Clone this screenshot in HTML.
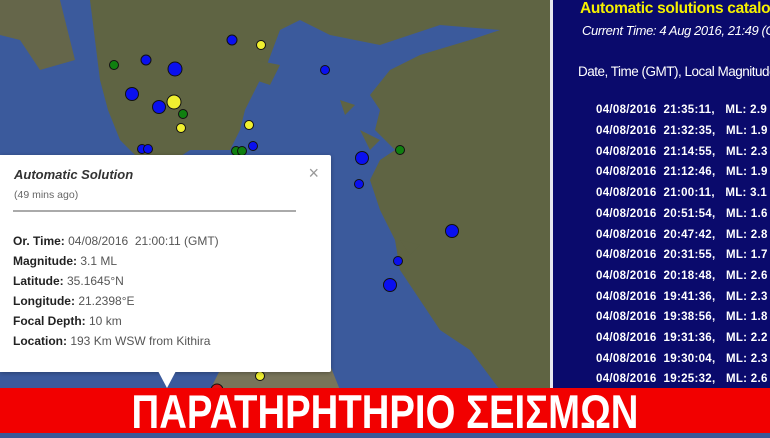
<!DOCTYPE html><html><head><meta charset="utf-8"><style>
body{margin:0;width:770px;height:433px;overflow:hidden;position:relative;font-family:"Liberation Sans",sans-serif;background:#3a5898}
#map{position:absolute;left:0;top:0}
#panel{position:absolute;left:550px;top:0;width:220px;height:390px;background:#0a0a6c;border-left:3px solid #e8e8f0}
.t{position:absolute;left:27px;top:0;color:#f5f000;font-weight:bold;font-size:15.5px;white-space:nowrap;letter-spacing:-0.3px}
.c{position:absolute;left:29px;top:23px;color:#fff;font-style:italic;font-size:13px;white-space:nowrap;letter-spacing:-0.4px}
.d{position:absolute;left:25px;top:64px;color:#fff;font-size:13.5px;white-space:nowrap;letter-spacing:-0.5px}
.r{position:absolute;left:43px;color:#fff;font-weight:bold;font-size:11.5px;white-space:nowrap;letter-spacing:0.3px}
#pop{position:absolute;left:0;top:155px;width:331px;height:217px;background:#fff;border-radius:0 2px 2px 0;box-shadow:0 1px 4px rgba(0,0,0,.3);font-size:12px;color:#555}
#pop b{color:#222}
#tail{position:absolute;left:158px;top:371px;width:0;height:0;border-left:9px solid transparent;border-right:9px solid transparent;border-top:17px solid #fff}
#ban{position:absolute;left:0;top:388px;width:770px;height:45px;background:#f20000;color:#fff;font-weight:bold;font-size:47px;text-align:center;line-height:47px;letter-spacing:0}
#ban span{display:inline-block;transform:scaleX(0.815)}
</style></head><body>
<svg id="map" width="552" height="390" viewBox="0 0 552 390">
<rect width="552" height="390" fill="#3b5a9c"/>
<path d="M0 0H60L75 60L40 70L20 40L0 35Z" fill="#65664a"/>
<path d="M90 0H552V390H500L470 350L440 330L420 300L400 270L395 240L380 210L370 180L380 160L395 150L375 130L380 110L370 95L390 70L420 55L470 40L500 30L440 25L380 45L330 35L300 20L280 30L265 70L255 90L245 110L240 130L230 150L190 150L175 160L140 160L120 140L108 110L100 80L95 40Z" fill="#5f6443"/>
<path d="M255 60L280 65L270 85L255 80Z M240 70L260 75L250 90Z" fill="#5f6443"/>
<path d="M340 100L355 105L345 115Z M400 240L420 245L410 255Z M360 130L380 140L370 150Z" fill="#5f6443"/>
<path d="M220 370L330 365L340 390H210Z" fill="#78745a"/>
<g stroke="#111" stroke-width="1">
<circle cx="232" cy="40" r="5" fill="#0a10f0"/><circle cx="261" cy="45" r="4.5" fill="#f0f030"/>
<circle cx="146" cy="60" r="5" fill="#0a10f0"/><circle cx="114" cy="65" r="4.5" fill="#108010"/>
<circle cx="175" cy="69" r="7" fill="#0a10f0"/><circle cx="132" cy="94" r="6.5" fill="#0a10f0"/>
<circle cx="174" cy="102" r="7" fill="#f0f030"/><circle cx="159" cy="107" r="6.5" fill="#0a10f0"/>
<circle cx="183" cy="114" r="4.5" fill="#108010"/><circle cx="181" cy="128" r="4.5" fill="#f0f030"/>
<circle cx="142" cy="149" r="4.5" fill="#0a10f0"/><circle cx="148" cy="149" r="4.5" fill="#0a10f0"/>
<circle cx="249" cy="125" r="4.5" fill="#f0f030"/><circle cx="253" cy="146" r="4.5" fill="#0a10f0"/>
<circle cx="236" cy="151" r="4.5" fill="#108010"/><circle cx="242" cy="151" r="4.5" fill="#108010"/>
<circle cx="325" cy="70" r="4.5" fill="#0a10f0"/><circle cx="362" cy="158" r="6.5" fill="#0a10f0"/>
<circle cx="400" cy="150" r="4.5" fill="#108010"/><circle cx="359" cy="184" r="4.5" fill="#0a10f0"/>
<circle cx="452" cy="231" r="6.5" fill="#0a10f0"/><circle cx="398" cy="261" r="4.5" fill="#0a10f0"/>
<circle cx="390" cy="285" r="6.5" fill="#0a10f0"/><circle cx="260" cy="376" r="4.5" fill="#f0f030"/>
<circle cx="217" cy="390" r="6" fill="#e01010"/>
</g>
</svg>
<div id="pop">
<div style="position:absolute;left:14px;top:12px;font-style:italic;font-weight:bold;font-size:13px;color:#333">Automatic Solution</div>
<div style="position:absolute;left:14px;top:34px;font-size:10.5px;color:#666">(49 mins ago)</div>
<div style="position:absolute;right:12px;top:8px;font-size:18px;color:#999">×</div>
<div style="position:absolute;left:13px;top:55px;width:283px;border-top:2px solid #aaa"></div>
<div style="position:absolute;left:13px;top:76px;line-height:20px;font-size:12px;white-space:nowrap">
<b>Or. Time:</b> 04/08/2016&nbsp; 21:00:11 (GMT)<br><b>Magnitude:</b> 3.1 ML<br><b>Latitude:</b> 35.1645°N<br><b>Longitude:</b> 21.2398°E<br><b>Focal Depth:</b> 10 km<br><b>Location:</b> 193 Km WSW from Kithira</div>
</div>
<div id="tail"></div>
<div id="panel">
<div class="t">Automatic solutions catalog</div>
<div class="c">Current Time: 4 Aug 2016, 21:49 (GMT)</div>
<div class="d">Date, Time (GMT), Local Magnitude</div>
<div class="r" style="top:104px">04/08/2016&nbsp; 21:35:11,&nbsp;&nbsp; ML: 2.9</div>
<div class="r" style="top:125px">04/08/2016&nbsp; 21:32:35,&nbsp;&nbsp; ML: 1.9</div>
<div class="r" style="top:146px">04/08/2016&nbsp; 21:14:55,&nbsp;&nbsp; ML: 2.3</div>
<div class="r" style="top:166px">04/08/2016&nbsp; 21:12:46,&nbsp;&nbsp; ML: 1.9</div>
<div class="r" style="top:187px">04/08/2016&nbsp; 21:00:11,&nbsp;&nbsp; ML: 3.1</div>
<div class="r" style="top:208px">04/08/2016&nbsp; 20:51:54,&nbsp;&nbsp; ML: 1.6</div>
<div class="r" style="top:229px">04/08/2016&nbsp; 20:47:42,&nbsp;&nbsp; ML: 2.8</div>
<div class="r" style="top:249px">04/08/2016&nbsp; 20:31:55,&nbsp;&nbsp; ML: 1.7</div>
<div class="r" style="top:270px">04/08/2016&nbsp; 20:18:48,&nbsp;&nbsp; ML: 2.6</div>
<div class="r" style="top:291px">04/08/2016&nbsp; 19:41:36,&nbsp;&nbsp; ML: 2.3</div>
<div class="r" style="top:311px">04/08/2016&nbsp; 19:38:56,&nbsp;&nbsp; ML: 1.8</div>
<div class="r" style="top:332px">04/08/2016&nbsp; 19:31:36,&nbsp;&nbsp; ML: 2.2</div>
<div class="r" style="top:353px">04/08/2016&nbsp; 19:30:04,&nbsp;&nbsp; ML: 2.3</div>
<div class="r" style="top:373px">04/08/2016&nbsp; 19:25:32,&nbsp;&nbsp; ML: 2.6</div>
</div>
<div id="ban"><span>ΠΑΡΑΤΗΡΗΤΗΡΙΟ ΣΕΙΣΜΩΝ</span></div>
</body></html>
